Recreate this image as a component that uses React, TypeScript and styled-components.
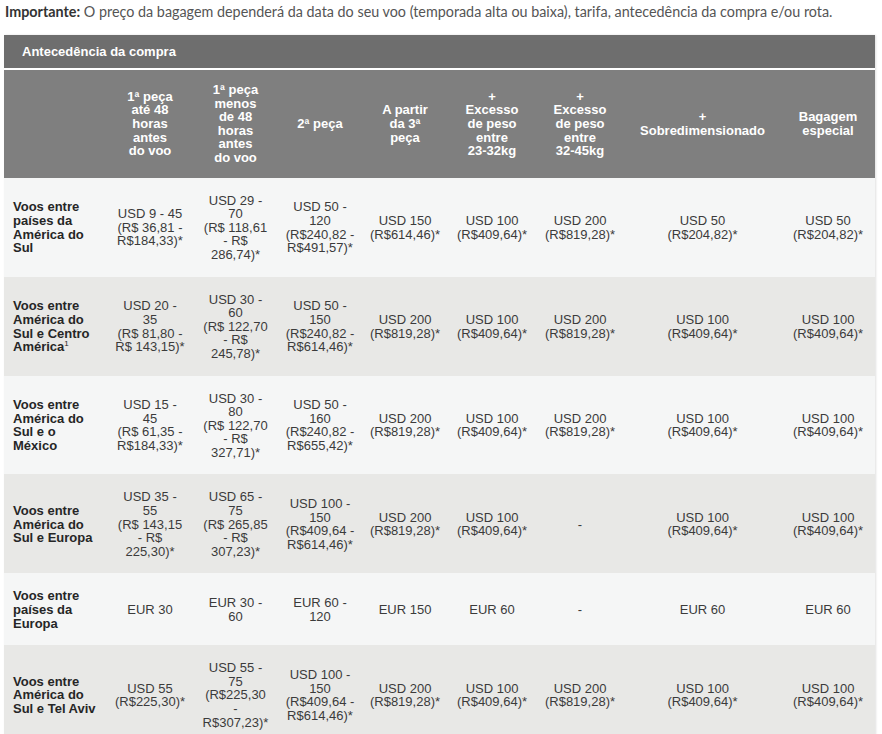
import * as React from 'react';
import styled, { createGlobalStyle } from 'styled-components';

const GlobalStyle = createGlobalStyle`
  html, body {
    margin: 0;
    padding: 0;
    overflow: hidden;
    background: #fff;
  }
`;

const Page = styled.div`
  padding: 0 7px 0 4px;
`;

const Note = styled.p`
  margin: 0 0 13px 1px;
  padding-top: 2px;
  font-family: Lato, 'Open Sans', sans-serif;
  font-size: 14.35px;
  line-height: 20px;
  color: #555;
`;

const Strong = styled.strong`
  color: #333;
  font-weight: 700;
`;

const Table = styled.table`
  width: 871px;
  table-layout: fixed;
  border-collapse: collapse;
  font-family: 'Liberation Sans', Arial, sans-serif;
  font-size: 13px;
  line-height: 13.6px;
  box-shadow: 1px 0 2px rgba(0, 0, 0, 0.12);
`;

const Col = styled.col<{ $w: number }>`
  width: ${(p) => p.$w}px;
`;

const TitleCell = styled.th`
  height: 33px;
  padding: 0 0 0 18px;
  background: #6e6e6e;
  color: #fff;
  font-weight: 700;
  text-align: left;
  vertical-align: middle;
  border-bottom: 2px solid #fff;
`;

const HeadCell = styled.th`
  padding: 13px 4px;
  background: #7f7f7f;
  color: #fff;
  font-weight: 700;
  text-align: center;
  vertical-align: middle;
  white-space: pre-line;
`;

const BodyRow = styled.tr<{ $alt: boolean }>`
  background: ${(p) => (p.$alt ? '#e8e8e6' : '#f5f6f6')};
`;

const LabelCell = styled.td`
  padding: 16px 4px 15px 9px;
  color: #262626;
  font-weight: 700;
  text-align: left;
  vertical-align: middle;
  white-space: pre-line;
`;

const ValueCell = styled.td`
  padding: 16px 4px 15px;
  color: #3b3b3b;
  text-align: center;
  vertical-align: middle;
  white-space: pre-line;
`;

const Sup = styled.sup`
  font-size: 8px;
  font-weight: 400;
  line-height: 0;
  vertical-align: 5px;
`;

type Row = { label: React.ReactNode; cells: string[] };

const HEADS = [
  '1ª peça\naté 48\nhoras\nantes\ndo voo',
  '1ª peça\nmenos\nde 48\nhoras\nantes\ndo voo',
  '2ª peça',
  'A partir\nda 3ª\npeça',
  '+\nExcesso\nde peso\nentre\n23-32kg',
  '+\nExcesso\nde peso\nentre\n32-45kg',
  '+\nSobredimensionado',
  'Bagagem\nespecial',
];

const WIDTHS = [103, 86, 85, 84, 86, 88, 88, 157, 94];

const ROWS: Row[] = [
  {
    label: 'Voos entre\npaíses da\nAmérica do\nSul',
    cells: [
      'USD 9 - 45\n(R$ 36,81 -\nR$184,33)*',
      'USD 29 -\n70\n(R$ 118,61\n- R$\n286,74)*',
      'USD 50 -\n120\n(R$240,82 -\nR$491,57)*',
      'USD 150\n(R$614,46)*',
      'USD 100\n(R$409,64)*',
      'USD 200\n(R$819,28)*',
      'USD 50\n(R$204,82)*',
      'USD 50\n(R$204,82)*',
    ],
  },
  {
    label: (
      <>
        {'Voos entre\nAmérica do\nSul e Centro\nAmérica'}
        <Sup>1</Sup>
      </>
    ),
    cells: [
      'USD 20 -\n35\n(R$ 81,80 -\nR$ 143,15)*',
      'USD 30 -\n60\n(R$ 122,70\n- R$\n245,78)*',
      'USD 50 -\n150\n(R$240,82 -\nR$614,46)*',
      'USD 200\n(R$819,28)*',
      'USD 100\n(R$409,64)*',
      'USD 200\n(R$819,28)*',
      'USD 100\n(R$409,64)*',
      'USD 100\n(R$409,64)*',
    ],
  },
  {
    label: 'Voos entre\nAmérica do\nSul e o\nMéxico',
    cells: [
      'USD 15 -\n45\n(R$ 61,35 -\nR$184,33)*',
      'USD 30 -\n80\n(R$ 122,70\n- R$\n327,71)*',
      'USD 50 -\n160\n(R$240,82 -\nR$655,42)*',
      'USD 200\n(R$819,28)*',
      'USD 100\n(R$409,64)*',
      'USD 200\n(R$819,28)*',
      'USD 100\n(R$409,64)*',
      'USD 100\n(R$409,64)*',
    ],
  },
  {
    label: 'Voos entre\nAmérica do\nSul e Europa',
    cells: [
      'USD 35 -\n55\n(R$ 143,15\n- R$\n225,30)*',
      'USD 65 -\n75\n(R$ 265,85\n- R$\n307,23)*',
      'USD 100 -\n150\n(R$409,64 -\nR$614,46)*',
      'USD 200\n(R$819,28)*',
      'USD 100\n(R$409,64)*',
      '-',
      'USD 100\n(R$409,64)*',
      'USD 100\n(R$409,64)*',
    ],
  },
  {
    label: 'Voos entre\npaíses da\nEuropa',
    cells: ['EUR 30', 'EUR 30 -\n60', 'EUR 60 -\n120', 'EUR 150', 'EUR 60', '-', 'EUR 60', 'EUR 60'],
  },
  {
    label: 'Voos entre\nAmérica do\nSul e Tel Aviv',
    cells: [
      'USD 55\n(R$225,30)*',
      'USD 55 -\n75\n(R$225,30\n-\nR$307,23)*',
      'USD 100 -\n150\n(R$409,64 -\nR$614,46)*',
      'USD 200\n(R$819,28)*',
      'USD 100\n(R$409,64)*',
      'USD 200\n(R$819,28)*',
      'USD 100\n(R$409,64)*',
      'USD 100\n(R$409,64)*',
    ],
  },
];

const App = () => (
  <>
    <GlobalStyle />
    <Page>
      <Note>
        <Strong>Importante:</Strong> O preço da bagagem dependerá da data do seu voo (temporada alta ou
        baixa), tarifa, antecedência da compra e/ou rota.
      </Note>
      <Table>
        <colgroup>
          {WIDTHS.map((w, i) => (
            <Col key={i} $w={w} />
          ))}
        </colgroup>
        <thead>
          <tr>
            <TitleCell colSpan={9}>Antecedência da compra</TitleCell>
          </tr>
          <tr>
            <HeadCell />
            {HEADS.map((h) => (
              <HeadCell key={h}>{h}</HeadCell>
            ))}
          </tr>
        </thead>
        <tbody>
          {ROWS.map((r, i) => (
            <BodyRow key={i} $alt={i % 2 === 1}>
              <LabelCell>{r.label}</LabelCell>
              {r.cells.map((c, j) => (
                <ValueCell key={j}>{c}</ValueCell>
              ))}
            </BodyRow>
          ))}
        </tbody>
      </Table>
    </Page>
  </>
);

export default App;
